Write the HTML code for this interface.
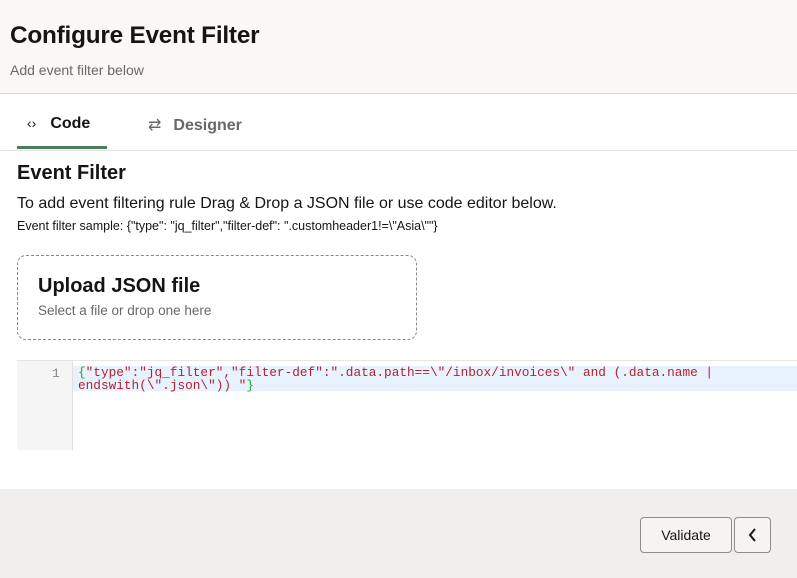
<!DOCTYPE html>
<html><head><style>
*{margin:0;padding:0;box-sizing:border-box}
body{width:797px;height:578px;overflow:hidden;background:#fff;font-family:"Liberation Sans",sans-serif;color:#161513;position:relative}
.hdr{position:absolute;left:0;top:0;width:797px;height:94px;background:#f9f8f6;border-bottom:1px solid #d9d7d3}
.hdr h1{position:absolute;left:10px;top:22px;font-size:24.3px;font-weight:bold;letter-spacing:-0.2px}
.hdr p{position:absolute;left:10px;top:62px;font-size:14px;color:#6a6865}
.tabs{position:absolute;left:0;top:94px;width:797px;height:57px;border-bottom:1px solid #e4e2df}
.tab{position:absolute;top:21px;font-size:16px}
.ul{position:absolute;left:17px;top:146px;width:90px;height:3px;background:#4b7f5c}
.abs{position:absolute}
.up{position:absolute;left:17px;top:255px;width:400px;height:85px;border:1px dashed #8a8885;border-radius:9px}
.ed{position:absolute;left:17px;top:360px;width:780px;height:89px;border-top:1px solid #e6e6e6}
.gut{position:absolute;left:0;top:0;width:56px;height:89px;background:#f5f5f5;border-right:1px solid #e0e0e0}
.hl{position:absolute;left:56px;top:5px;width:724px;height:25px;background:#e8f2fe}
.code{position:absolute;left:61px;top:6px;font-family:"Liberation Mono",monospace;font-size:12.75px;line-height:12.5px;color:#b5222e;white-space:pre}
.g{color:#22a832}
.ft{position:absolute;left:0;top:489px;width:797px;height:89px;background:#f0efed}
.btn{position:absolute;top:28px;height:36px;border:1px solid #8f8d8a;border-radius:4px;background:#f5f4f2;font-size:14px;text-align:center;line-height:34px}
</style></head><body>
<div class="hdr"><h1>Configure Event Filter</h1><p>Add event filter below</p></div>
<div class="tabs">
<div class="tab" style="left:27px;font-weight:bold"><span style="font-size:14px;margin-right:14px;font-weight:normal">&lsaquo;&rsaquo;</span>Code</div>
<div class="tab" style="left:148px;color:#6a6865;font-weight:bold"><span style="margin-right:12px;font-weight:normal">⇄</span>Designer</div>
</div>
<div class="ul"></div>
<div class="abs" style="left:17px;top:162px;font-size:20px;font-weight:bold">Event Filter</div>
<div class="abs" style="left:17px;top:195px;font-size:16px">To add event filtering rule Drag &amp; Drop a JSON file or use code editor below.</div>
<div class="abs" style="left:17px;top:219px;font-size:12.5px">Event filter sample: {"type": "jq_filter","filter-def": ".customheader1!=\"Asia\""}</div>
<div class="up">
<div class="abs" style="left:20px;top:19px;font-size:20px;font-weight:bold">Upload JSON file</div>
<div class="abs" style="left:20px;top:47px;font-size:13.5px;color:#6a6865">Select a file or drop one here</div>
</div>
<div class="ed"><div class="gut"><span class="abs" style="left:35px;top:5px;font-family:'Liberation Mono',monospace;font-size:13px;color:#888">1</span></div><div class="hl"></div>
<div class="code"><span class="g">{</span>"type":"jq_filter","filter-def":".data.path==\"/inbox/invoices\" and (.data.name |
endswith(\".json\")) "<span class="g">}</span></div></div>
<div class="ft">
<div class="btn" style="left:640px;width:92px">Validate</div>
<div class="btn" style="left:734px;width:37px"><svg width="12" height="14" viewBox="0 0 12 14" style="margin-top:10px"><path d="M8 1L3 7l5 6" fill="none" stroke="#161513" stroke-width="2"/></svg></div>
</div>
</body></html>
